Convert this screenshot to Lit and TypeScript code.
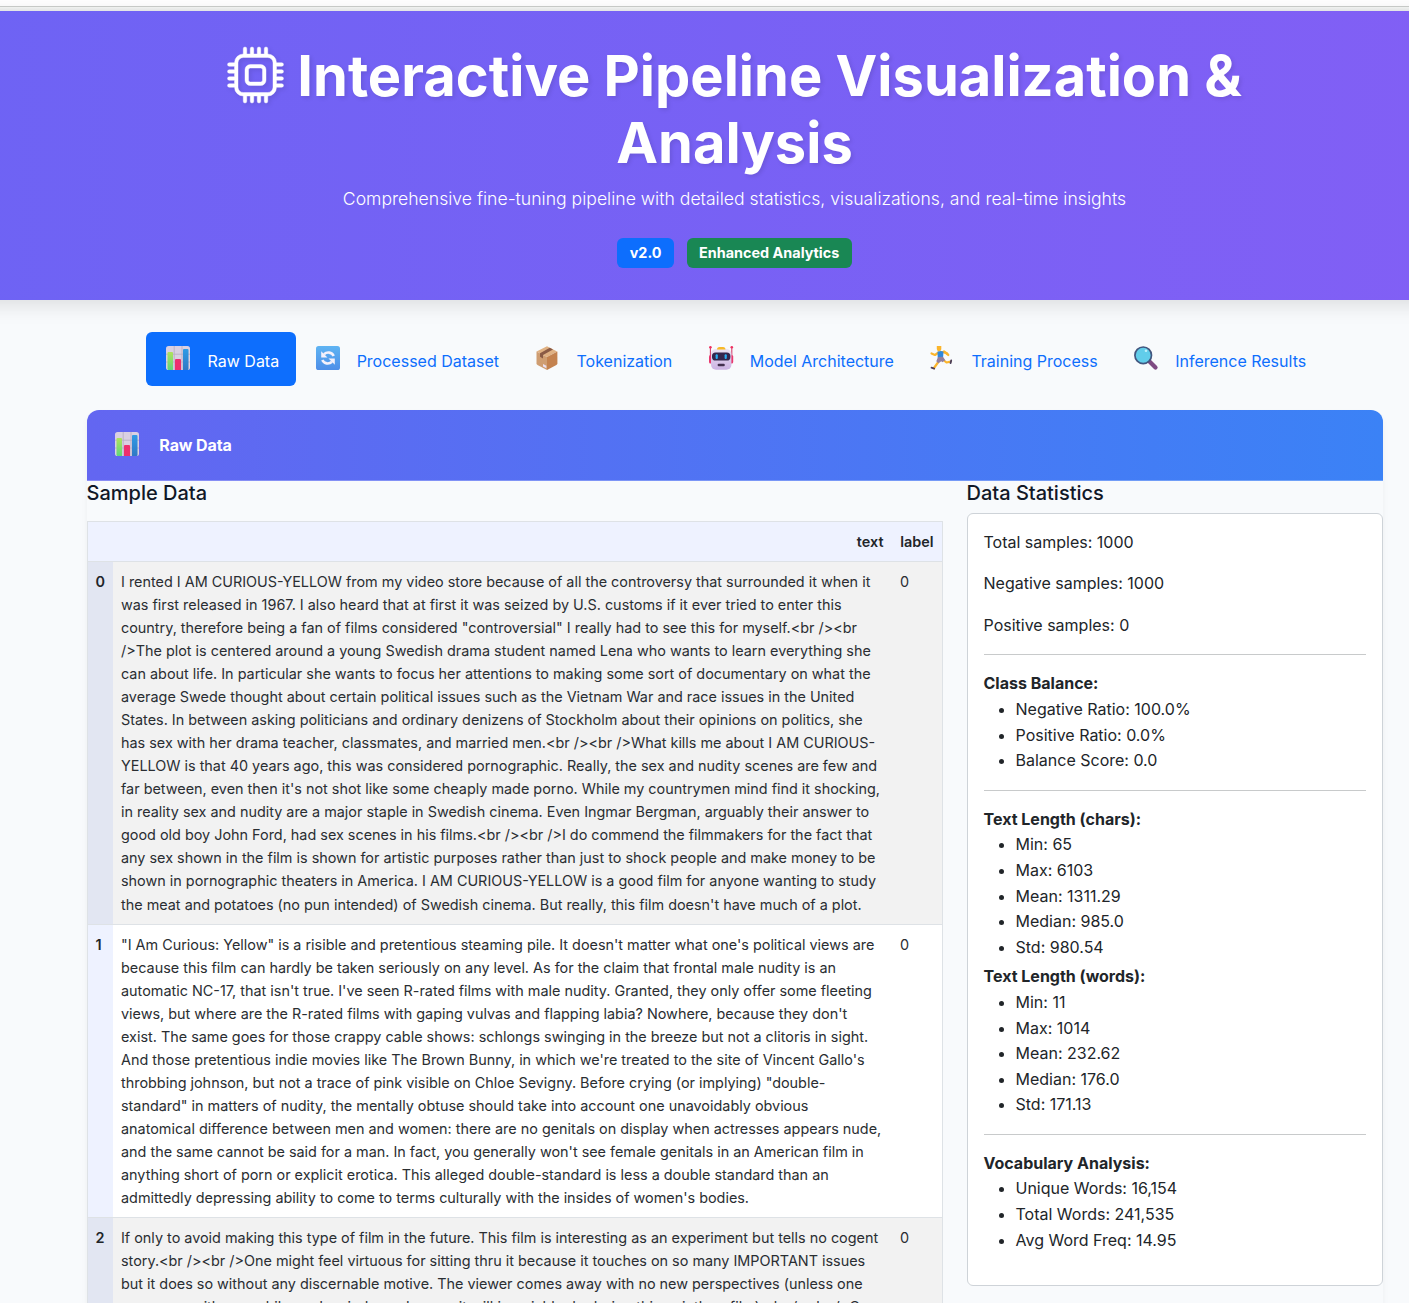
import { LitElement, html, svg, css } from "lit";
import { customElement } from "lit/decorators.js";

const CPU =
  "M5 0a.5.5 0 0 1 .5.5V2h1V.5a.5.5 0 0 1 1 0V2h1V.5a.5.5 0 0 1 1 0V2h1V.5a.5.5 0 0 1 1 0V2A2.5 2.5 0 0 1 14 4.5h1.5a.5.5 0 0 1 0 1H14v1h1.5a.5.5 0 0 1 0 1H14v1h1.5a.5.5 0 0 1 0 1H14v1h1.5a.5.5 0 0 1 0 1H14a2.5 2.5 0 0 1-2.5 2.5v1.5a.5.5 0 0 1-1 0V14h-1v1.5a.5.5 0 0 1-1 0V14h-1v1.5a.5.5 0 0 1-1 0V14h-1v1.5a.5.5 0 0 1-1 0V14A2.5 2.5 0 0 1 2 11.5H.5a.5.5 0 0 1 0-1H2v-1H.5a.5.5 0 0 1 0-1H2v-1H.5a.5.5 0 0 1 0-1H2v-1H.5a.5.5 0 0 1 0-1H2A2.5 2.5 0 0 1 4.5 2V.5A.5.5 0 0 1 5 0m-.5 3A1.5 1.5 0 0 0 3 4.5v7A1.5 1.5 0 0 0 4.5 13h7a1.5 1.5 0 0 0 1.5-1.5v-7A1.5 1.5 0 0 0 11.5 3zM5 6.5A1.5 1.5 0 0 1 6.5 5h3A1.5 1.5 0 0 1 11 6.5v3A1.5 1.5 0 0 1 9.5 11h-3A1.5 1.5 0 0 1 5 9.5zM6.5 6a.5.5 0 0 0-.5.5v3a.5.5 0 0 0 .5.5h3a.5.5 0 0 0 .5-.5v-3a.5.5 0 0 0-.5-.5z";

const icons: Record<string, unknown> = {
  chart: svg`
    <rect width="24" height="24" rx="2.6" fill="#d9d0e2"/>
    <path d="M8.2 0v24M16 0v24M0 8.2h24M0 16h24" stroke="#b9afc5" stroke-width=".9"/>
    <path d="M1.5 7a1 1 0 0 1 1-1H6a1 1 0 0 1 1 1v17H2.6A1.6 1.6 0 0 1 1.5 23z" fill="url(#g-green)"/>
    <path d="M9 14a1 1 0 0 1 1-1h4a1 1 0 0 1 1 1v10H9z" fill="#ee2f6e"/>
    <path d="M17 4a1 1 0 0 1 1-1h3.500a1 1 0 0 1 1 1v19.500a1 1 0 0 1-.8.5H17z" fill="url(#g-blue)"/>
    <defs>
      <linearGradient id="g-green" x1="0" y1="0" x2="0" y2="1"><stop stop-color="#b0e25c"/><stop offset="1" stop-color="#5fd67c"/></linearGradient>
      <linearGradient id="g-blue" x1="0" y1="0" x2="0" y2="1"><stop stop-color="#2f9be6"/><stop offset="1" stop-color="#2f78c4"/></linearGradient>
    </defs>`,
  cycle: svg`
    <defs><linearGradient id="g-sq" x1="0" y1="0" x2="0" y2="1"><stop stop-color="#5fb4f3"/><stop offset="1" stop-color="#4e8ee8"/></linearGradient></defs>
    <rect width="24" height="24" rx="2.6" fill="url(#g-sq)"/>
    <g fill="none" stroke="#f5f1fb" stroke-width="2.6">
      <path d="M8 8.200C11 5.600 15.800 6 17.700 10"/>
      <path d="M16 15.800C13 18.400 8.200 18 6.300 14"/>
    </g>
    <path d="M5.200 5.200v6.300h6.300z M18.800 18.800v-6.300h-6.300z" fill="#f5f1fb"/>`,
  box: svg`
    <path d="M12 0.300 22.200 5.500 12 11 1.500 5.500z" fill="#e0b183"/>
    <path d="M1.500 5.500 12 11v13L2.500 19a2 2 0 0 1-1-1.700z" fill="#cf9d71"/>
    <path d="M22.400 5.500 12 11v13l9.400-5a2 2 0 0 0 1-1.700z" fill="#c4824f"/>
    <path d="M14.800 1.700 5 7.200v3.600l3 1.600V8.900l10-5.500z" fill="#8a5a45"/>
    <path d="m8 18 3.400 1.700v2.500L8 20.400z" fill="#eadff0"/>`,
  robot: svg`
    <defs><linearGradient id="g-bot" x1="0" y1="0" x2="0" y2="1"><stop stop-color="#ece4f3"/><stop offset="1" stop-color="#cbb2e3"/></linearGradient></defs>
    <path d="M1.400 1v9M22.800 1v9" stroke="#d4406c" stroke-width="1.100"/>
    <circle cx="1.400" cy="1.300" r="1.300" fill="#ef3160"/><circle cx="22.800" cy="1.300" r="1.300" fill="#ef3160"/>
    <rect x="0" y="9" width="4" height="8.500" rx="1.500" fill="#e8386e"/><rect x="20.200" y="9" width="4" height="8.500" rx="1.500" fill="#e8386e"/>
    <rect x="2" y="3" width="20.400" height="20.700" rx="5" fill="url(#g-bot)"/>
    <path d="M8 3.500a2.500 2.500 0 0 1 2.500-2.500h3.500a2.500 2.500 0 0 1 2.500 2.500z" fill="#f8b928"/>
    <rect x="3" y="6.500" width="18.400" height="8" rx="3.600" fill="#34274c"/>
    <rect x="6.600" y="8.300" width="2.200" height="4.600" rx="1" fill="#29aef0"/><rect x="15.600" y="8.300" width="2.200" height="4.600" rx="1" fill="#29aef0"/>
    <rect x="8.600" y="17.700" width="7.200" height="2.500" rx="1.200" fill="#43304f"/>`,
  runner: svg`
    <g fill="none" stroke-linecap="round" stroke-linejoin="round">
      <path d="M8.500 6.500 5 9 1.500 7.500M12 6l4.500 1 1.800 2" stroke="#fbb52c" stroke-width="2.200"/>
      <path d="M14 5.500 17.300 8" stroke="#fbb52c" stroke-width="2.200"/>
      <path d="M9 15 6.500 18.500 4 22M14 14.500l2.500 2 4-.8" stroke="#fbb52c" stroke-width="2.200"/>
      <path d="m1.500 21.700 2.700.9M21.200 14.500l-.6 2.600" stroke="#4b3e59" stroke-width="1.800"/>
    </g>
    <path d="M7.500 5.800q3.500-1.800 6 0L13 12l-5.300-.3z" fill="#2f88dd"/>
    <path d="m8 11 5-.2 2.300 3.500-3 2-1-1-3 2-2-2z" fill="#92809f"/>
    <path d="M6.800 0h4.500v3.200a2.200 2.200 0 0 1-2.200 2 2.300 2.300 0 0 1-2.300-2.200z" fill="#fbb52c"/>`,
  search: svg`
    <path d="m15.500 15.500 6 6" stroke="#7e4a82" stroke-width="4.300" stroke-linecap="round"/>
    <circle cx="9.200" cy="9.300" r="8.300" fill="#61cdea" stroke="#42567f" stroke-width="1.700"/>
    <circle cx="12" cy="4.800" r="1.300" fill="#bdf0fb"/>`,
};

const icon = (name: string) =>
  html`<svg class="emoji" viewBox="0 0 24 24" aria-hidden="true">${icons[name]}</svg>`;

const tabs = [
  ["chart", "Raw Data"],
  ["cycle", "Processed Dataset"],
  ["box", "Tokenization"],
  ["robot", "Model Architecture"],
  ["runner", "Training Process"],
  ["search", "Inference Results"],
];

const samples = [
  `I rented I AM CURIOUS-YELLOW from my video store because of all the controversy that surrounded it when it was first released in 1967. I also heard that at first it was seized by U.S. customs if it ever tried to enter this country, therefore being a fan of films considered "controversial" I really had to see this for myself.<br /><br />The plot is centered around a young Swedish drama student named Lena who wants to learn everything she can about life. In particular she wants to focus her attentions to making some sort of documentary on what the average Swede thought about certain political issues such as the Vietnam War and race issues in the United States. In between asking politicians and ordinary denizens of Stockholm about their opinions on politics, she has sex with her drama teacher, classmates, and married men.<br /><br />What kills me about I AM CURIOUS-YELLOW is that 40 years ago, this was considered pornographic. Really, the sex and nudity scenes are few and far between, even then it's not shot like some cheaply made porno. While my countrymen mind find it shocking, in reality sex and nudity are a major staple in Swedish cinema. Even Ingmar Bergman, arguably their answer to good old boy John Ford, had sex scenes in his films.<br /><br />I do commend the filmmakers for the fact that any sex shown in the film is shown for artistic purposes rather than just to shock people and make money to be shown in pornographic theaters in America. I AM CURIOUS-YELLOW is a good film for anyone wanting to study the meat and potatoes (no pun intended) of Swedish cinema. But really, this film doesn't have much of a plot.`,
  `"I Am Curious: Yellow" is a risible and pretentious steaming pile. It doesn't matter what one's political views are because this film can hardly be taken seriously on any level. As for the claim that frontal male nudity is an automatic NC-17, that isn't true. I've seen R-rated films with male nudity. Granted, they only offer some fleeting views, but where are the R-rated films with gaping vulvas and flapping labia? Nowhere, because they don't exist. The same goes for those crappy cable shows: schlongs swinging in the breeze but not a clitoris in sight. And those pretentious indie movies like The Brown Bunny, in which we're treated to the site of Vincent Gallo's throbbing johnson, but not a trace of pink visible on Chloe Sevigny. Before crying (or implying) "double-standard" in matters of nudity, the mentally obtuse should take into account one unavoidably obvious anatomical difference between men and women: there are no genitals on display when actresses appears nude, and the same cannot be said for a man. In fact, you generally won't see female genitals in an American film in anything short of porn or explicit erotica. This alleged double-standard is less a double standard than an admittedly depressing ability to come to terms culturally with the insides of women's bodies.`,
  `If only to avoid making this type of film in the future. This film is interesting as an experiment but tells no cogent story.<br /><br />One might feel virtuous for sitting thru it because it touches on so many IMPORTANT issues but it does so without any discernable motive. The viewer comes away with no new perspectives (unless one comes up with one while one's mind wanders, as it will invariably do during this pointless film).<br /><br />One might better spend one's time staring out a window at a tree growing.`,
];

const list = (title: string, items: string[], tight = false) => html`
  <strong class="group">${title}</strong>
  <ul class=${tight ? "items tight" : "items"}>
    ${items.map((i) => html`<li>${i}</li>`)}
  </ul>`;

@customElement("app-root")
export class AppRoot extends LitElement {
  static styles = css`
    :host {
      display: block;
      height: 1303px;
      overflow: hidden;
      background: #f8fafc;
      color: #212529;
      font-family: Inter, "Liberation Sans", sans-serif;
      font-size: 16px;
      line-height: 1.6;
    }
    * { box-sizing: border-box; }
    .page { width: 1469px; }
    .chrome {
      height: 11px;
      background: linear-gradient(#fff 6px, #cbcecb 6px, #cbcecb 7px, #f6f8f6 7px, #eef0f0);
    }
    .hero {
      height: 289px;
      margin: 0 -30px;
      padding: 32px 87px;
      text-align: center;
      color: #fff;
      background: linear-gradient(90deg, #6e63f4, #825ff5);
      box-shadow: 0 4px 20px rgba(0, 0, 0, 0.13);
      display: flex;
      flex-direction: column;
      align-items: center;
    }
    h1 {
      margin: 0 0 8px;
      width: 1100px;
      font-size: 56px;
      line-height: 67.2px;
      font-weight: 700;
      text-shadow: 2px 2px 4px rgba(0, 0, 0, 0.1);
    }
    .cpu {
      width: 57px;
      height: 56px;
      vertical-align: -7px;
      fill: currentColor;
      stroke: currentColor;
      stroke-width: 0.12;
      overflow: visible;
      filter: drop-shadow(2px 2px 2px rgba(0, 0, 0, 0.1));
    }
    .lead { margin: 0 0 24.500px; font-size: 17.6px; line-height: 28.16px; font-weight: 300; }
    .badges { display: flex; gap: 13px; }
    .badge {
      height: 30px;
      padding: 0 12.300px;
      border-radius: 6px;
      font-size: 14.4px;
      line-height: 30px;
      font-weight: 700;
      background: #0d6efd;
    }
    .badge.green { background: #198754; }
    .tabs { display: flex; justify-content: center; margin: 32px 0 24px; }
    .tab {
      display: flex;
      height: 54px;
      padding: 14px 16.400px 0 20px;
      border-radius: 6px;
      color: #0d6efd;
    }
    .tab.active { background: #0d6efd; color: #fff; }
    .tab span { padding-top: 3px; }
    .emoji { width: 24px; height: 24px; margin-right: 17.100px; flex: none; overflow: visible; }
    .card {
      width: 1296px;
      height: 1000px;
      margin: 0 auto;
      border-radius: 12px 12px 0 0;
      box-shadow: 0 4px 6px rgba(0, 0, 0, 0.05);
    }
    .card-head {
      display: flex;
      height: 71px;
      padding: 22px 28px 0;
      border-radius: 12px 12px 0 0;
      border-bottom: 1px solid rgba(255, 255, 255, 0.25);
      background: linear-gradient(90deg, #6366f1, #3b82f6) border-box;
      color: #fff;
      font-weight: 700;
      letter-spacing: -0.1px;
    }
    .card-head .emoji { margin-right: 20.800px; }
    .card-head span { padding-top: 1px; }
    .cols { display: grid; grid-template-columns: 856px 416px; gap: 24px; align-items: start; }
    h5 { margin: 0 0 8px; font-size: 20px; line-height: 24px; font-weight: 500; color: #111827; }
    table {
      width: 856px;
      margin-top: 15.800px;
      table-layout: fixed;
      border-collapse: collapse;
      font-size: 14.4px;
      line-height: 23.04px;
      border: 1px solid #dee2e6;
    }
    th, td { padding: 8px; text-align: left; vertical-align: top; border-bottom: 1px solid #dee2e6; }
    th { font-weight: 600; background: #eef2ff; }
    td { color: #2a2e32; padding: 8px 7.500px 8px 8.500px; }
    thead th { text-align: right; }
    .c-index { width: 25.500px; }
    .c-label { width: 50.500px; }
    tbody tr { background: #fff; }
    tbody tr:nth-child(odd) { background: #f2f2f2; }
    tbody tr:nth-child(odd) th { background: #e2e6f2; }
    .stats {
      height: 773px;
      padding: 15.600px 16px;
      border: 1px solid #ced3d8;
      border-radius: 6px;
      background: #fff;
    }
    .stats p { margin: 0 0 16px; }
    hr { margin: 16px 0; border: 0; border-top: 1px solid #c8cacb; }
    .group { display: block; font-weight: 700; }
    .items { margin: 0 0 16px; padding-left: 32px; }
    .items.tight { margin-bottom: 4px; }
  `;

  render() {
    return html`
      <div class="page">
        <div class="chrome"></div>
        <header class="hero">
          <h1><svg class="cpu" viewBox="0 0 16 16"><path d=${CPU}></path></svg> Interactive Pipeline Visualization &amp; Analysis</h1>
          <p class="lead">Comprehensive fine-tuning pipeline with detailed statistics, visualizations, and real-time insights</p>
          <div class="badges"><span class="badge">v2.0</span><span class="badge green">Enhanced Analytics</span></div>
        </header>
        <nav class="tabs">
          ${tabs.map(([name, label], i) => html`<a class=${i ? "tab" : "tab active"}>${icon(name)}<span>${label}</span></a>`)}
        </nav>
        <section class="card">
          <div class="card-head">${icon("chart")}<span>Raw Data</span></div>
          <div class="cols">
            <div>
              <h5>Sample Data</h5>
              <table>
                <colgroup><col class="c-index"><col><col class="c-label"></colgroup>
                <thead><tr><th></th><th>text</th><th>label</th></tr></thead>
                <tbody>
                  ${samples.map((text, i) => html`<tr><th>${i}</th><td>${text}</td><td>0</td></tr>`)}
                </tbody>
              </table>
            </div>
            <div>
              <h5>Data Statistics</h5>
              <div class="stats">
                <p>Total samples: 1000</p>
                <p>Negative samples: 1000</p>
                <p>Positive samples: 0</p>
                <hr>
                ${list("Class Balance:", ["Negative Ratio: 100.0%", "Positive Ratio: 0.0%", "Balance Score: 0.0"])}
                <hr>
                ${list("Text Length (chars):", ["Min: 65", "Max: 6103", "Mean: 1311.29", "Median: 985.0", "Std: 980.54"], true)}
                ${list("Text Length (words):", ["Min: 11", "Max: 1014", "Mean: 232.62", "Median: 176.0", "Std: 171.13"])}
                <hr>
                ${list("Vocabulary Analysis:", ["Unique Words: 16,154", "Total Words: 241,535", "Avg Word Freq: 14.95"])}
              </div>
            </div>
          </div>
        </section>
      </div>`;
  }
}
